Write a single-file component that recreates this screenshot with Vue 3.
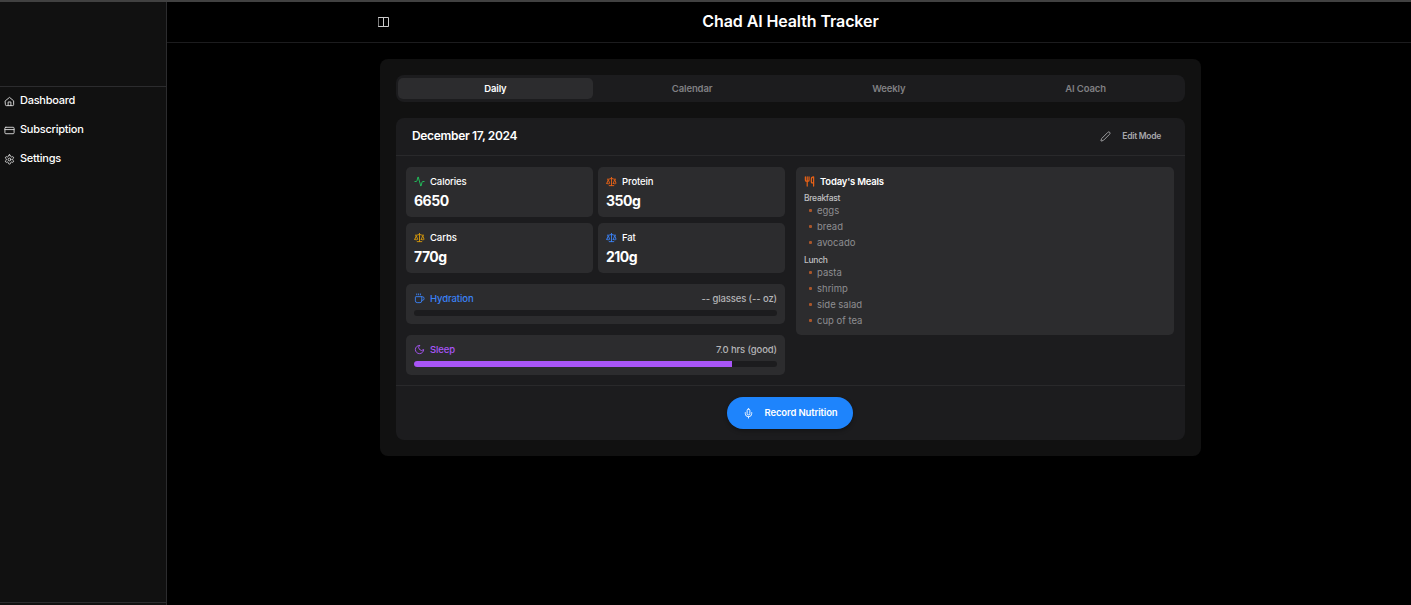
<template>
  <div class="app-shell">
    <!-- Sidebar -->
    <aside class="sidebar">
      <div class="sidebar-header"></div>
      <nav class="sidebar-nav">
        <a v-for="item in navItems" :key="item.label" class="nav-item">
          <svg class="nav-icon" viewBox="0 0 24 24">
            <path v-for="d in icons[item.icon]" :key="d" :d="d" />
          </svg>
          <span>{{ item.label }}</span>
        </a>
      </nav>
      <div class="sidebar-footer"></div>
    </aside>

    <main class="main">
      <header class="topbar">
        <div class="topbar-inner">
          <svg class="toggle-icon" viewBox="0 0 12 10">
            <path d="M.5.5h10v9H.5zM5.5.5v9" />
          </svg>
          <h1 class="title">Chad AI Health Tracker</h1>
        </div>
      </header>

      <section class="panel">
        <div class="tabs">
          <button
            v-for="tab in tabs"
            :key="tab"
            :class="['tab', { 'tab-active': tab === activeTab }]"
            @click="activeTab = tab"
          >{{ tab }}</button>
        </div>

        <div class="day-card">
          <div class="day-header">
            <h2 class="day-title">December 17, 2024</h2>
            <button class="edit-btn">
              <svg class="icon edit-icon" viewBox="0 0 24 24">
                <path v-for="d in icons.pencil" :key="d" :d="d" />
              </svg>
              <span>Edit Mode</span>
            </button>
          </div>

          <div class="day-body">
            <div class="stats">
              <div class="macro-grid">
                <div v-for="m in macros" :key="m.label" class="macro">
                  <div class="row-label">
                    <svg :class="['icon', m.color]" viewBox="0 0 24 24">
                      <path v-for="d in icons[m.icon]" :key="d" :d="d" />
                    </svg>
                    <span>{{ m.label }}</span>
                  </div>
                  <div class="macro-value">{{ m.value }}</div>
                </div>
              </div>

              <div v-for="b in bars" :key="b.label" class="bar-card">
                <div class="bar-top">
                  <div :class="['row-label', b.color]">
                    <svg class="icon" viewBox="0 0 24 24">
                      <path v-for="d in icons[b.icon]" :key="d" :d="d" />
                    </svg>
                    <span>{{ b.label }}</span>
                  </div>
                  <span class="bar-value">{{ b.value }}</span>
                </div>
                <div class="track">
                  <div class="fill" :style="{ width: b.percent + '%' }"></div>
                </div>
              </div>
            </div>

            <div class="meals">
              <div class="row-label meals-title">
                <svg class="icon orange" viewBox="0 0 24 24">
                  <path v-for="d in icons.utensils" :key="d" :d="d" />
                </svg>
                <span>Today's Meals</span>
              </div>
              <div v-for="meal in meals" :key="meal.name" class="meal">
                <h3 class="meal-name">{{ meal.name }}</h3>
                <ul class="meal-list">
                  <li v-for="food in meal.foods" :key="food">{{ food }}</li>
                </ul>
              </div>
            </div>
          </div>

          <div class="day-footer">
            <button class="record-btn">
              <svg class="icon mic-icon" viewBox="0 0 24 24">
                <path v-for="d in icons.mic" :key="d" :d="d" />
              </svg>
              <span>Record Nutrition</span>
            </button>
          </div>
        </div>
      </section>
    </main>
  </div>
</template>

<script setup>
import { ref } from 'vue'

const icons = {
  home: ['M3 10.5 12 3l9 7.5V19a2 2 0 0 1-2 2H5a2 2 0 0 1-2-2z', 'M9 21v-8h6v8'],
  card: ['M4 5h16a2 2 0 0 1 2 2v10a2 2 0 0 1-2 2H4a2 2 0 0 1-2-2V7a2 2 0 0 1 2-2z', 'M2 10h20'],
  settings: [
    'M12.22 2h-.44a2 2 0 0 0-2 2v.18a2 2 0 0 1-1 1.73l-.43.25a2 2 0 0 1-2 0l-.15-.08a2 2 0 0 0-2.73.73l-.22.38a2 2 0 0 0 .73 2.73l.15.1a2 2 0 0 1 1 1.72v.51a2 2 0 0 1-1 1.74l-.15.09a2 2 0 0 0-.73 2.73l.22.38a2 2 0 0 0 2.73.73l.15-.08a2 2 0 0 1 2 0l.43.25a2 2 0 0 1 1 1.73V20a2 2 0 0 0 2 2h.44a2 2 0 0 0 2-2v-.18a2 2 0 0 1 1-1.73l.43-.25a2 2 0 0 1 2 0l.15.08a2 2 0 0 0 2.73-.73l.22-.39a2 2 0 0 0-.73-2.73l-.15-.08a2 2 0 0 1-1-1.74v-.5a2 2 0 0 1 1-1.74l.15-.09a2 2 0 0 0 .73-2.73l-.22-.38a2 2 0 0 0-2.73-.73l-.15.08a2 2 0 0 1-2 0l-.43-.25a2 2 0 0 1-1-1.73V4a2 2 0 0 0-2-2z',
    'M15 12a3 3 0 1 1-6 0 3 3 0 0 1 6 0z'
  ],
  pencil: [
    'M21.174 6.812a1 1 0 0 0-3.986-3.987L3.842 16.174a2 2 0 0 0-.5.83l-1.321 4.352a.5.5 0 0 0 .623.622l4.353-1.32a2 2 0 0 0 .83-.497z'
  ],
  activity: [
    'M22 12h-2.48a2 2 0 0 0-1.93 1.46l-2.35 8.36a.25.25 0 0 1-.48 0L9.24 2.18a.25.25 0 0 0-.48 0l-2.35 8.36A2 2 0 0 1 4.49 12H2'
  ],
  scale: [
    'm16 16 3-8 3 8c-.87.65-1.92 1-3 1s-2.13-.35-3-1Z',
    'm2 16 3-8 3 8c-.87.65-1.92 1-3 1s-2.13-.35-3-1Z',
    'M7 21h10',
    'M12 3v18',
    'M3 7h2c2 0 5-1 7-2 2 1 5 2 7 2h2'
  ],
  coffee: [
    'M10 2v2',
    'M14 2v2',
    'M6 2v2',
    'M16 8a1 1 0 0 1 1 1v8a4 4 0 0 1-4 4H7a4 4 0 0 1-4-4V9a1 1 0 0 1 1-1h14a4 4 0 1 1 0 8h-1'
  ],
  moon: ['M12 3a6 6 0 0 0 9 9 9 9 0 1 1-9-9Z'],
  utensils: [
    'M3 2v7c0 1.1.9 2 2 2h4a2 2 0 0 0 2-2V2',
    'M7 2v20',
    'M21 15V2a5 5 0 0 0-5 5v6c0 1.1.9 2 2 2h3Zm0 0v7'
  ],
  mic: [
    'M12 2a3 3 0 0 0-3 3v7a3 3 0 0 0 6 0V5a3 3 0 0 0-3-3Z',
    'M19 10v2a7 7 0 0 1-14 0v-2',
    'M12 19v3'
  ]
}

const navItems = [
  { label: 'Dashboard', icon: 'home' },
  { label: 'Subscription', icon: 'card' },
  { label: 'Settings', icon: 'settings' }
]

const tabs = ['Daily', 'Calendar', 'Weekly', 'AI Coach']
const activeTab = ref('Daily')

const macros = [
  { label: 'Calories', value: '6650', icon: 'activity', color: 'green' },
  { label: 'Protein', value: '350g', icon: 'scale', color: 'orange' },
  { label: 'Carbs', value: '770g', icon: 'scale', color: 'yellow' },
  { label: 'Fat', value: '210g', icon: 'scale', color: 'blue' }
]

const bars = [
  { label: 'Hydration', value: '-- glasses (-- oz)', icon: 'coffee', color: 'blue', percent: 0 },
  { label: 'Sleep', value: '7.0 hrs (good)', icon: 'moon', color: 'purple', percent: 87.5 }
]

const meals = [
  { name: 'Breakfast', foods: ['eggs', 'bread', 'avocado'] },
  { name: 'Lunch', foods: ['pasta', 'shrimp', 'side salad', 'cup of tea'] }
]
</script>

<style>
body {
  margin: 0;
  background: #000;
}
</style>

<style scoped>
* {
  box-sizing: border-box;
}

.app-shell {
  display: flex;
  height: 605px;
  overflow: hidden;
  border-top: 2px solid #414141;
  background: #000;
  color: #fff;
  font-family: Inter, "Liberation Sans", sans-serif;
}

h1,
h2,
h3,
ul {
  margin: 0;
  padding: 0;
}

button {
  border: none;
  background: none;
  padding: 0;
  font-family: inherit;
  cursor: pointer;
}

svg {
  fill: none;
  stroke: currentColor;
  stroke-width: 2;
  stroke-linecap: round;
  stroke-linejoin: round;
  flex: none;
}

/* ===== Sidebar ===== */
.sidebar {
  display: flex;
  flex-direction: column;
  width: 167px;
  flex: none;
  background: #111;
  border-right: 1px solid #2c2c2e;
}

.sidebar-header {
  height: 85px;
  border-bottom: 1px solid #2c2c2e;
}

.sidebar-nav {
  flex: 1;
}

.nav-item {
  display: flex;
  align-items: center;
  gap: 5px;
  height: 29px;
  padding: 0 0 3px 4px;
  font-size: 11px;
  font-weight: 500;
  letter-spacing: -0.25px;
}

.nav-icon {
  width: 11px;
  height: 11px;
  margin-top: 2px;
  color: #ddd;
}

.sidebar-footer {
  height: 3px;
  border-top: 1px solid #2c2c2e;
}

/* ===== Top bar ===== */
.main {
  flex: 1;
}

.topbar {
  height: 41px;
  border-bottom: 1px solid #1c1c1e;
}

.topbar-inner {
  display: grid;
  grid-template-columns: 12px 1fr 12px;
  align-items: center;
  width: 825px;
  height: 38px;
  margin-left: 211px;
}

.toggle-icon {
  width: 12px;
  height: 10px;
  margin-top: 2px;
  stroke-width: 1;
  stroke-linejoin: miter;
  color: #ccc;
}

.title {
  text-align: center;
  line-height: 20px;
  font-size: 16px;
  font-weight: 600;
  letter-spacing: -0.1px;
}

/* ===== Panel and tabs ===== */
.panel {
  width: 821px;
  height: 397px;
  margin: 16px 0 0 213px;
  padding: 16px;
  background: #111;
  border-radius: 8px;
}

.tabs {
  display: grid;
  grid-template-columns: repeat(4, 1fr);
  gap: 2px;
  height: 27px;
  padding: 3px 2px;
  background: #1c1c1e;
  border-radius: 8px;
}

.tab {
  border-radius: 5px;
  font-size: 9.5px;
  font-weight: 600;
  letter-spacing: -0.1px;
  color: #808083;
}

.tab-active {
  background: #2c2c2e;
  color: #fff;
}

/* ===== Day card ===== */
.day-card {
  height: 322px;
  margin-top: 16px;
  background: #1c1c1e;
  border-radius: 8px;
}

.day-header {
  display: flex;
  align-items: center;
  justify-content: space-between;
  height: 38px;
  padding: 0 24px 2px 16px;
  border-bottom: 1px solid #29292b;
}

.day-title {
  font-size: 12px;
  font-weight: 600;
  letter-spacing: -0.33px;
}

.edit-btn {
  display: flex;
  align-items: center;
  gap: 11px;
  padding-top: 1px;
  font-size: 8.5px;
  font-weight: 600;
  letter-spacing: -0.27px;
  color: #a8a8ab;
}

.day-body {
  display: grid;
  grid-template-columns: 379px 378px;
  align-items: start;
  gap: 11px;
  height: 229px;
  padding: 11px 10px 0;
}

.macro-grid {
  display: grid;
  grid-template-columns: 1fr 1fr;
  gap: 6px 5px;
}

.macro,
.bar-card,
.meals {
  background: #2c2c2e;
  border-radius: 5px;
  padding: 8px;
}

.macro {
  height: 50px;
}

.row-label {
  display: flex;
  align-items: center;
  gap: 5px;
  height: 13px;
  font-size: 9.5px;
  font-weight: 500;
  letter-spacing: -0.1px;
}

.icon {
  width: 11px;
  height: 11px;
}

.macro-value {
  margin-top: 4px;
  line-height: 18px;
  font-size: 14px;
  font-weight: 700;
  letter-spacing: -0.5px;
}

.bar-card {
  height: 40px;
  margin-top: 11px;
}

.bar-top {
  display: flex;
  align-items: center;
  justify-content: space-between;
}

.bar-value {
  font-size: 9.5px;
  font-weight: 500;
  letter-spacing: -0.12px;
  color: #b4b4b7;
}

.track {
  height: 6px;
  margin-top: 5px;
  overflow: hidden;
  background: #1c1c1e;
  border-radius: 3px;
}

.fill {
  height: 100%;
  background: #a855f7;
}

/* ===== Meals ===== */
.meals {
  height: 168px;
}

.meals-title {
  font-weight: 600;
  letter-spacing: -0.2px;
}

.meals-title .icon {
  stroke-width: 2.6;
}

.meal-name {
  margin-top: 5px;
  line-height: 10px;
  font-size: 8.5px;
  font-weight: 500;
  letter-spacing: -0.3px;
  color: #c0c0c2;
}

.meal-list {
  margin-top: -1px;
  list-style: none;
}

.meal-list li {
  display: flex;
  align-items: center;
  gap: 5px;
  height: 16px;
  padding-left: 5px;
  font-size: 9.5px;
  color: #8e8e91;
}

.meal-list li::before {
  content: '';
  width: 3px;
  height: 3px;
  border-radius: 1px;
  background: #a9562b;
}

/* ===== Footer ===== */
.day-footer {
  display: flex;
  justify-content: center;
  align-items: center;
  height: 55px;
  padding-right: 1px;
  border-top: 1px solid #29292b;
}

.record-btn {
  display: flex;
  align-items: center;
  justify-content: center;
  gap: 11px;
  width: 126px;
  height: 32px;
  padding-bottom: 1px;
  border-radius: 16px;
  background: #1e84fc;
  box-shadow: 0 2px 4px rgba(0, 0, 0, 0.3);
  color: #fff;
  font-size: 9.5px;
  font-weight: 600;
  letter-spacing: -0.13px;
}

.mic-icon {
  margin-top: 1px;
}

/* ===== Accent colours ===== */
.green {
  color: #22c55e;
}

.orange {
  color: #ea6216;
}

.yellow {
  color: #d99a0b;
}

.blue {
  color: #3b82f6;
}

.purple {
  color: #a855f7;
}
</style>
